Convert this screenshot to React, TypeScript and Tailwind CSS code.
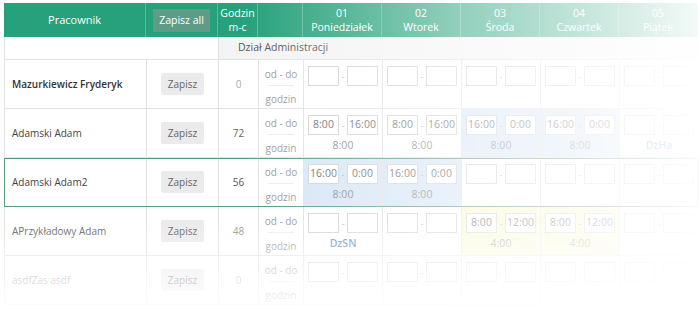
import React from "react";

type Day = {
  from?: string;
  to?: string;
  hours?: string;
  note?: string;
  tone?: "blue" | "yellow";
};

type Row = {
  name: string;
  total: string;
  nameClass: string;
  totalClass: string;
  selected?: boolean;
  days: Day[];
};

const empty: Day = {};

const rows: Row[] = [
  {
    name: "Mazurkiewicz Fryderyk",
    total: "0",
    nameClass: "font-semibold text-[#333]",
    totalClass: "text-[#aaa]",
    days: [empty, empty, empty, empty, empty],
  },
  {
    name: "Adamski Adam",
    total: "72",
    nameClass: "text-[#444]",
    totalClass: "text-[#666]",
    days: [
      { from: "8:00", to: "16:00", hours: "8:00" },
      { from: "8:00", to: "16:00", hours: "8:00" },
      { from: "16:00", to: "0:00", hours: "8:00", tone: "blue" },
      { from: "16:00", to: "0:00", hours: "8:00", tone: "blue" },
      { note: "DzHa" },
    ],
  },
  {
    name: "Adamski Adam2",
    total: "56",
    nameClass: "text-[#444]",
    totalClass: "text-[#555]",
    selected: true,
    days: [
      { from: "16:00", to: "0:00", hours: "8:00", tone: "blue" },
      { from: "16:00", to: "0:00", hours: "8:00", tone: "blue" },
      empty,
      empty,
      empty,
    ],
  },
  {
    name: "APrzykładowy Adam",
    total: "48",
    nameClass: "text-[#666]",
    totalClass: "text-[#999]",
    days: [
      { note: "DzSN" },
      empty,
      { from: "8:00", to: "12:00", hours: "4:00", tone: "yellow" },
      { from: "8:00", to: "12:00", hours: "4:00", tone: "yellow" },
      empty,
    ],
  },
  {
    name: "asdfZas asdf",
    total: "0",
    nameClass: "text-[#999]",
    totalClass: "text-[#aaa]",
    days: [empty, empty, empty, empty, empty],
  },
];

const headerDays = [
  ["01", "Poniedziałek"],
  ["02", "Wtorek"],
  ["03", "Środa"],
  ["04", "Czwartek"],
  ["05", "Piątek"],
];

const cols = "grid grid-cols-[142px_72px_40px_45px_repeat(5,79px)]";

function TimeBox({ value }: { value?: string }) {
  return (
    <div className="flex h-[20px] w-[31px] items-center justify-center border border-[#d2d2d2] bg-white text-[10.5px] text-[#666]">
      {value}
    </div>
  );
}

function DayCell({ day }: { day: Day }) {
  const bg =
    day.tone === "blue"
      ? "bg-[#d6e5f5]"
      : day.tone === "yellow"
      ? "bg-[#f8f9cc]"
      : "bg-white";
  return (
    <div className={`flex flex-col border-r border-[#e2e2e2] ${bg}`}>
      <div className="flex h-[29px] items-start justify-center pt-[6px]">
        <TimeBox value={day.from} />
        <span className="w-[8px] text-center text-[10px] leading-[20px] text-[#bbb]">-</span>
        <TimeBox value={day.to} />
      </div>
      <div className="text-center text-[10.5px] leading-[14px]">
        {day.hours && <span className="text-[#888]">{day.hours}</span>}
        {day.note && <span className="font-semibold text-[#4d82c4]">{day.note}</span>}
      </div>
    </div>
  );
}

function EmployeeRow({ row }: { row: Row }) {
  return (
    <div
      className={`${cols} h-[49px] border-b border-l border-[#e2e2e2] ${
        row.selected ? "relative z-10 outline-1 -outline-offset-1 outline-[#5a9b7e]" : ""
      }`}
    >
      <div className={`flex items-center border-r border-[#e2e2e2] pl-[7px] text-[10px] ${row.nameClass}`}>
        {row.name}
      </div>
      <div className="flex items-center justify-center border-r border-[#e2e2e2]">
        <div className="flex h-[22px] w-[43px] items-center justify-center rounded-[2px] bg-[#ebebeb] text-[10px] text-[#666]">
          Zapisz
        </div>
      </div>
      <div className={`flex items-center justify-center border-r border-[#e2e2e2] text-[10px] ${row.totalClass}`}>
        {row.total}
      </div>
      <div className="flex flex-col items-center border-r border-[#e2e2e2] pt-[7px] text-[10px] leading-[14px] text-[#999]">
        <span>od - do</span>
        <div className="my-[4px] h-px w-[26px] bg-[#ececec]" />
        <span className="mt-[2px]">godzin</span>
      </div>
      {row.days.map((d, i) => (
        <DayCell key={i} day={d} />
      ))}
    </div>
  );
}

export default function App() {
  return (
    <div className="relative h-[309px] w-[700px] overflow-hidden bg-white pl-[4px] pt-[3px] font-['Open_Sans',sans-serif]">
      <div className="w-[694px]">
        {/* nagłówek */}
        <div className={`${cols} h-[34px] bg-[#27a17b] text-[11px] leading-[14px] text-white`}>
          <div className="flex items-center justify-center border-r border-white/25">Pracownik</div>
          <div className="flex items-center justify-center border-r border-white/25">
            <div className="flex h-[23px] w-[57px] items-center justify-center bg-[#5e9c88] text-[10.5px]">
              Zapisz all
            </div>
          </div>
          <div className="flex flex-col items-center justify-center border-r border-white/25 text-[10.5px]">
            <span>Godzin</span>
            <span>m-c</span>
          </div>
          <div className="border-r border-white/25" />
          {headerDays.map(([n, d]) => (
            <div key={n} className="flex flex-col items-center justify-center border-r border-white/25 text-[10.5px]">
              <span>{n}</span>
              <span>{d}</span>
            </div>
          ))}
        </div>

        {/* dział */}
        <div className="flex h-[23px] border-b border-l border-[#e2e2e2]">
          <div className="w-[214px] border-r border-[#e2e2e2] bg-white" />
          <div className="flex flex-1 items-center bg-[#f4f4f4] pl-[19px] text-[10.5px] text-[#555]">
            Dział Administracji
          </div>
        </div>

        {rows.map((r) => (
          <EmployeeRow key={r.name} row={r} />
        ))}
      </div>

      {/* zanikanie w prawo i w dół */}
      <div className="pointer-events-none absolute inset-0 z-20 bg-linear-to-r from-white/0 from-[35%] via-white/50 via-[66%] to-white/95" />
      <div className="pointer-events-none absolute inset-0 z-20 bg-linear-to-b from-white/0 from-[72%] via-white/60 via-[88%] to-white/90" />
    </div>
  );
}
